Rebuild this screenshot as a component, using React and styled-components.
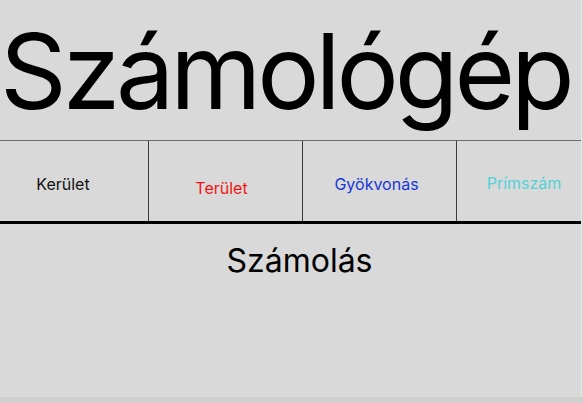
import React from "react";
import styled, { createGlobalStyle } from "styled-components";

const Global = createGlobalStyle`
  html, body { margin: 0; padding: 0; background: #d2cfcf; }
  body { font-family: Inter, "Noto Sans", sans-serif; }
`;

const Frame = styled.div`
  width: 581px;
  height: 397px;
  background: #d9d9d9;
  border-right: 1px solid #e6e6e6;
  display: flex;
  flex-direction: column;
`;

const Header = styled.header`
  height: 140px;
  display: flex;
  align-items: center;
`;

const Title = styled.h1`
  margin: 0;
  font-family: Inter, sans-serif;
  font-weight: 400;
  font-size: 104px;
  line-height: 1.21;
  color: #000;
  letter-spacing: -4.1px;
  transform: translate(0px, 2px);
  white-space: nowrap;
`;

const Nav = styled.nav`
  display: grid;
  grid-template-columns: 148px 154px 154px 1fr;
  height: 80px;
  border-top: 1px solid #6b6b6b;
  border-bottom: 3px solid #000;
`;

const Cell = styled.div`
  display: flex;
  align-items: center;
  justify-content: center;
  border-left: ${(p) => (p.$first ? "none" : "1px solid #3a3a3a")};
`;

const NavLabel = styled.span`
  font-family: Inter, sans-serif;
  font-size: 16px;
  color: ${(p) => p.$color};
  transform: translate(${(p) => p.$dx}px, ${(p) => p.$dy}px);
`;

const Body = styled.section`
  flex: 1;
  display: flex;
  justify-content: center;
  padding-top: 18px;
`;

const Subtitle = styled.h2`
  margin: 0;
  font-family: Inter, sans-serif;
  font-weight: 400;
  font-size: 32px;
  line-height: 1.21;
  color: #000;
  transform: translateX(9px);
`;

const items = [
  { label: "Kerület", color: "#111", dx: -11, dy: 3 },
  { label: "Terület", color: "#f01515", dx: -4, dy: 7 },
  { label: "Gyökvonás", color: "#1537d6", dx: -3, dy: 3 },
  { label: "Prímszám", color: "#52d2d8", dx: 5, dy: 2 },
];

export default function App() {
  return (
    <>
      <Global />
      <Frame>
        <Header>
          <Title>Számológép</Title>
        </Header>
        <Nav>
          {items.map((it, i) => (
            <Cell key={it.label} $first={i === 0}>
              <NavLabel $color={it.color} $dx={it.dx} $dy={it.dy}>
                {it.label}
              </NavLabel>
            </Cell>
          ))}
        </Nav>
        <Body>
          <Subtitle>Számolás</Subtitle>
        </Body>
      </Frame>
    </>
  );
}
